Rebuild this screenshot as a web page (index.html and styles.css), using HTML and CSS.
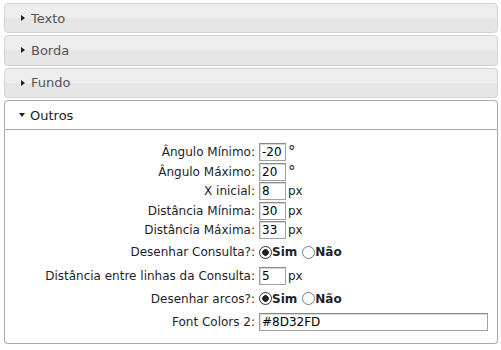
FILE: index.html
```html
<!DOCTYPE html>
<html lang="pt">
<head>
  <meta charset="UTF-8" />
  <title>Opções</title>
  <link rel="stylesheet" href="styles.css">
</head>
<body>

<div class="accordion">
  <h3 class="acc-header"><span class="arrow-right"></span>Texto</h3>
  <h3 class="acc-header"><span class="arrow-right"></span>Borda</h3>
  <h3 class="acc-header"><span class="arrow-right"></span>Fundo</h3>
  <h3 class="acc-header active"><span class="arrow-down"></span>Outros</h3>
  <div class="acc-content">
    <div class="form">
      <label class="lbl">Ângulo Mínimo:</label>
      <div class="field"><input class="small" type="text" value="-20"/><span class="unit deg">°</span></div>

      <label class="lbl">Ângulo Máximo:</label>
      <div class="field"><input class="small" type="text" value="20"/><span class="unit deg">°</span></div>

      <label class="lbl">X inicial:</label>
      <div class="field"><input class="small" type="text" value="8"/><span class="unit">px</span></div>

      <label class="lbl">Distância Mínima:</label>
      <div class="field"><input class="small" type="text" value="30"/><span class="unit">px</span></div>

      <label class="lbl">Distância Máxima:</label>
      <div class="field"><input class="small" type="text" value="33"/><span class="unit">px</span></div>

      <label class="lbl">Desenhar Consulta?:</label>
      <div class="field">
        <input class="radio" type="radio" name="consulta" checked/><b>Sim</b>
        <input class="radio" type="radio" name="consulta"/><b>Não</b>
      </div>

      <label class="lbl">Distância entre linhas da Consulta:</label>
      <div class="field"><input class="small" type="text" value="5"/><span class="unit">px</span></div>

      <label class="lbl">Desenhar arcos?:</label>
      <div class="field">
        <input class="radio" type="radio" name="arcos" checked/><b>Sim</b>
        <input class="radio" type="radio" name="arcos"/><b>Não</b>
      </div>

      <label class="lbl">Font Colors 2:</label>
      <div class="field"><input class="wide" type="text" value="#8D32FD"/></div>
    </div>
  </div>
</div>

</body>
</html>
```

FILE: styles.css
```css
body {
  margin: 3px 3px 0 4px;
  font-family: "DejaVu Sans", Verdana, sans-serif;
  background-color: #fff;
  color: #222;
}
.accordion {
  width: 494px;
}
.acc-header {
  display: flex;
  align-items: center;
  box-sizing: border-box;
  height: 30.3px;
  margin: 2px 0 0 0;
  padding-left: 16px;
  font-size: 13px;
  font-weight: normal;
  color: #555;
  border: 1px solid #d3d3d3;
  border-radius: 4px;
  background: linear-gradient(#eeeeee 50%, #e6e6e6 50%);
}
.acc-header:first-child { margin-top: 0; }
.acc-header.active {
  color: #212121;
  background: #fff;
  border-color: #aaa;
  border-radius: 4px 4px 0 0;
}
.arrow-right {
  width: 0;
  height: 0;
  border-top: 3.5px solid transparent;
  border-bottom: 3.5px solid transparent;
  border-left: 4px solid #222;
  margin-right: 6px;
}
.arrow-down {
  width: 0;
  height: 0;
  border-left: 3.5px solid transparent;
  border-right: 3.5px solid transparent;
  border-top: 4px solid #222;
  margin-left: -2px;
  margin-right: 5px;
}
.acc-content {
  border: 1px solid #aaa;
  border-top: 0;
  border-radius: 0 0 4px 4px;
  padding: 12px 9px 10px 10px;
}
.form {
  display: grid;
  grid-template-columns: 243px 1fr;
  grid-template-rows: repeat(5, 19.6px) 24px 23px 23px 23px;
  column-gap: 1px;
  font-size: 12px;
  color: #1e1e2a;
}
.lbl {
  display: flex;
  align-items: center;
  justify-content: flex-end;
  padding-right: 3px;
}
.field {
  display: flex;
  align-items: center;
  white-space: nowrap;
}
input.small,
input.wide {
  box-sizing: border-box;
  height: 18px;
  margin: 0;
  padding: 0 2px;
  font-family: "DejaVu Sans", Verdana, sans-serif;
  font-size: 12px;
  color: #000;
  border: 1px solid #a0a0a0;
  border-top-color: #8a8a8a;
  box-shadow: inset 1px 1px 0 #d8d8d8;
  background: #fff;
}
input.small { width: 27px; }
input.wide { width: 229px; }
.unit { margin-left: 2px; }
.deg {
  font-size: 15px;
}
.radio {
  appearance: none;
  -webkit-appearance: none;
  box-sizing: border-box;
  width: 13px;
  height: 13px;
  margin: 0;
  border: 1px solid #7a7a7a;
  border-radius: 50%;
  background: #fff;
}
.radio:checked {
  border: 1.5px solid #333;
  background: radial-gradient(circle, #222 0, #222 3px, #fff 3.6px);
}
.field b { margin-right: 5px; }
```
